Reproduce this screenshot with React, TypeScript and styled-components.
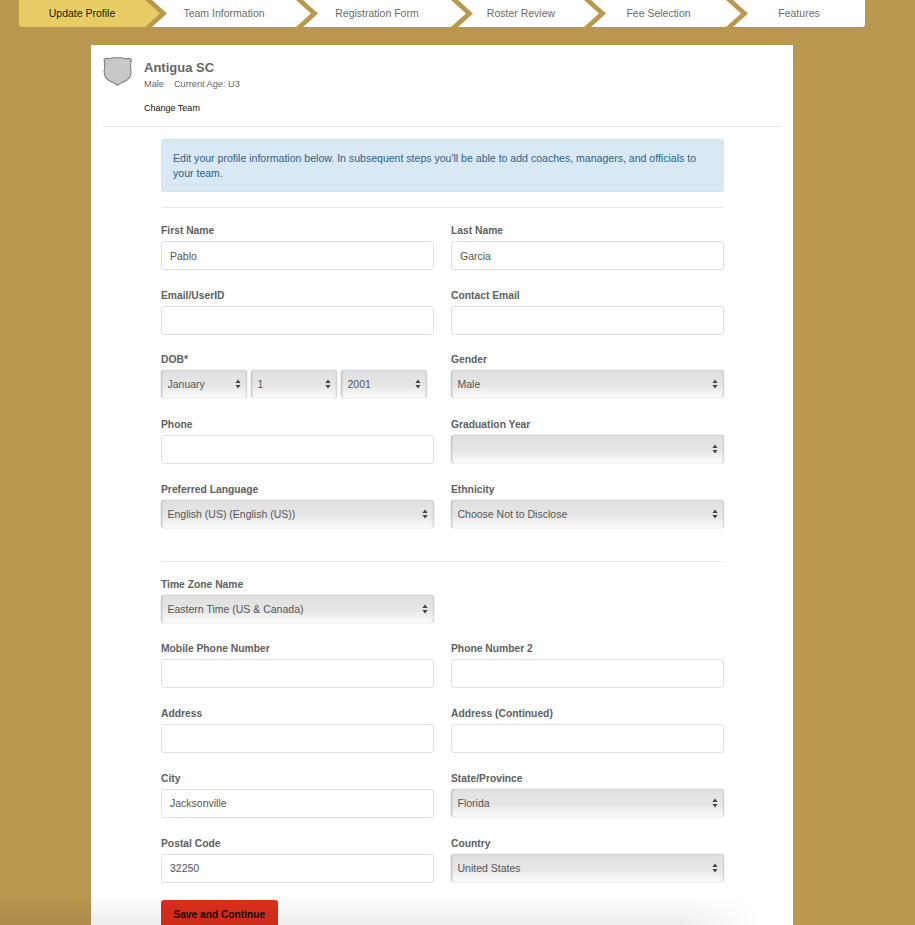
import React from 'react';
import styled, { createGlobalStyle } from 'styled-components';

const GlobalStyle = createGlobalStyle`
	html, body {
		margin: 0;
		height: 925px;
		overflow: hidden;
		background: #b9974f;
		font-family: "Liberation Sans", Arial, sans-serif;
	}
`;

const Page = styled.div`
	position: relative;
	height: 925px;
	overflow: hidden;
	padding-left: 19px;
	box-sizing: border-box;
`;

const Steps = styled.div`
	display: flex;
	height: 27px;
	width: 846px;
`;

const Step = styled.div<{ $w: number; $active?: boolean; $first?: boolean; $last?: boolean }>`
	flex: none;
	width: ${(p) => p.$w}px;
	height: 27px;
	margin-left: ${(p) => (p.$first ? 0 : -8)}px;
	display: flex;
	align-items: center;
	justify-content: center;
	padding-right: ${(p) => (p.$last ? 0 : 15)}px;
	padding-bottom: 2px;
	box-sizing: border-box;
	font-size: 10.5px;
	color: ${(p) => (p.$active ? '#1c1a12' : '#6b6b6b')};
	background: ${(p) => (p.$active ? '#e8cd66' : '#ffffff')};
	border-radius: ${(p) => (p.$first ? '0 0 0 3px' : p.$last ? '0 0 3px 0' : '0')};
	clip-path: ${(p) =>
		p.$first
			? 'polygon(0 0, calc(100% - 15px) 0, 100% 50%, calc(100% - 15px) 100%, 0 100%)'
			: p.$last
				? 'polygon(0 0, 100% 0, 100% 100%, 0 100%, 15px 50%)'
				: 'polygon(0 0, calc(100% - 15px) 0, 100% 50%, calc(100% - 15px) 100%, 0 100%, 15px 50%)'};
`;

const Card = styled.div`
	width: 702px;
	margin: 18px 0 0 72px;
	background: #ffffff;
	padding: 0 11px 0 12px;
	box-sizing: border-box;
	height: 900px;
`;

const TeamHeader = styled.div`
	display: flex;
	height: 81px;
	border-bottom: 1px solid #e8e8e8;
`;

const Crest = styled.svg`
	width: 29px;
	height: 29px;
	margin-top: 12px;
	flex: none;
`;

const TeamInfo = styled.div`
	margin-left: 12px;
	padding-top: 15px;
`;

const TeamName = styled.div`
	font-size: 13px;
	line-height: 16px;
	font-weight: bold;
	color: #666666;
`;

const TeamMeta = styled.div`
	display: flex;
	gap: 10px;
	margin-top: 3px;
	font-size: 9.2px;
	line-height: 11px;
	color: #666666;
`;

const ChangeTeam = styled.a`
	display: block;
	margin-top: 13px;
	font-size: 9px;
	line-height: 11px;
	color: #111111;
`;

const FormBody = styled.div`
	width: 562.5px;
	margin: 12px 0 0 58px;
`;

const Alert = styled.div`
	background: #d8e8f5;
	border: 1px solid #d1e4f3;
	border-radius: 3px;
	box-sizing: border-box;
	height: 53px;
	padding: 11px 11px;
	font-size: 10.55px;
	line-height: 15px;
	color: #2f5f85;
`;

const Rule = styled.div<{ $top: number; $bottom: number }>`
	height: 1px;
	background: #e8e8e8;
	margin-top: ${(p) => p.$top}px;
	margin-bottom: ${(p) => p.$bottom}px;
`;

const FieldGrid = styled.div`
	display: grid;
	grid-template-columns: 272.5px 272.5px;
	grid-auto-rows: 46px;
	column-gap: 17.5px;
	row-gap: 18.7px;
`;

const Field = styled.div`
	min-width: 0;
`;

const Label = styled.label`
	display: block;
	font-size: 10.3px;
	line-height: 14px;
	font-weight: bold;
	color: #606060;
	margin-bottom: 5px;
	height: 12px;
`;

const TextInput = styled.input`
	display: block;
	width: 100%;
	height: 29px;
	box-sizing: border-box;
	border: 1px solid #e0e0e0;
	border-radius: 3px;
	padding: 0 8px;
	font: 10.5px "Liberation Sans", Arial, sans-serif;
	color: #555555;
	background: #ffffff;
	outline: none;
`;

const SelectWrap = styled.div`
	position: relative;
	flex: 1;
	min-width: 0;
`;

const Select = styled.select`
	display: block;
	width: 100%;
	height: 28px;
	box-sizing: border-box;
	appearance: none;
	border: 0;
	border-radius: 3px;
	padding: 0 16px 0 6.5px;
	font: 10.5px "Liberation Sans", Arial, sans-serif;
	color: #555555;
	background: linear-gradient(180deg, #e0e0e0 0%, #e6e6e6 55%, #fcfcfc 100%);
	box-shadow: inset 2px 0 2px -1px #bdbdbd, inset -2px 0 2px -1px #cfcfcf, inset 0 1px 1px #d8d8d8, 0 0 0 0.5px #e6e6e6;
	outline: none;
`;

const Updown = styled.svg`
	position: absolute;
	right: 6px;
	top: 9px;
	width: 6px;
	height: 10px;
	pointer-events: none;
`;

const DobRow = styled.div`
	display: flex;
	gap: 4px;
`;

const DobCell = styled.div`
	flex: none;
	width: 86px;
	display: flex;
`;

const SaveButton = styled.button`
	display: block;
	margin-top: 17.5px;
	width: 116.5px;
	height: 28px;
	padding: 0;
	border: 0;
	border-radius: 3px;
	background: #dd2f1c;
	font: bold 10.2px "Liberation Sans", Arial, sans-serif;
	color: #1a0a06;
`;

const BottomFade = styled.div`
	position: absolute;
	left: 0;
	right: 0;
	bottom: 0;
	height: 30px;
	pointer-events: none;
	background: linear-gradient(180deg, rgba(0, 0, 0, 0), rgba(0, 0, 0, 0.07));
	mask-image: linear-gradient(90deg, #000 680px, transparent 760px);
`;

const noop = () => {};

const Dropdown = ({ value }: { value: string }) => (
	<SelectWrap>
		<Select value={value} onChange={noop}>
			<option value={value}>{value}</option>
		</Select>
		<Updown viewBox="0 0 6 10">
			<path d="M3 0.5 L5.6 4 H0.4 Z M3 9.5 L0.4 6 H5.6 Z" fill="#444444" />
		</Updown>
	</SelectWrap>
);

const InputField = ({ label, value = '' }: { label: string; value?: string }) => (
	<Field>
		<Label>{label}</Label>
		<TextInput value={value} onChange={noop} />
	</Field>
);

const SelectField = ({ label, value }: { label: string; value: string }) => (
	<Field>
		<Label>{label}</Label>
		<Dropdown value={value} />
	</Field>
);

const steps = [
	{ name: 'Update Profile', w: 141 },
	{ name: 'Team Information', w: 159 },
	{ name: 'Registration Form', w: 163 },
	{ name: 'Roster Review', w: 141 },
	{ name: 'Fee Selection', w: 150 },
	{ name: 'Features', w: 132 }
];

const App = () => {
	return (
		<Page>
			<GlobalStyle />
			<Steps>
				{steps.map((s, i) => (
					<Step key={s.name} $w={s.w} $active={i === 0} $first={i === 0} $last={i === steps.length - 1}>
						{s.name}
					</Step>
				))}
			</Steps>
			<Card>
				<TeamHeader>
					<Crest viewBox="0 0 29 29">
						<path
							d="M1 3 L3 1.2 C6 1.8 8 1.8 10 0.8 H19 C21 1.8 24 1.8 26 1.2 L28.4 3 C27.3 6 27.3 9 27.8 12 C28.6 17 26.8 22 22 24.3 C19 25.7 17 26.3 14.6 28.4 C12.3 26.3 10 25.7 7.2 24.3 C2.4 22 0.6 17 1.4 12 C1.9 9 2 6 1 3 Z"
							fill="#c8c8c8"
							stroke="#7d7d7d"
							strokeWidth="1.1"
						/>
					</Crest>
					<TeamInfo>
						<TeamName>Antigua SC</TeamName>
						<TeamMeta>
							<span>Male</span>
							<span>Current Age: U3</span>
						</TeamMeta>
						<ChangeTeam>Change Team</ChangeTeam>
					</TeamInfo>
				</TeamHeader>
				<FormBody>
					<Alert>
						Edit your profile information below. In subsequent steps you'll be able to add coaches, managers, and officials to your team.
					</Alert>
					<Rule $top={15} $bottom={16} />
					<FieldGrid>
						<InputField label="First Name" value="Pablo" />
						<InputField label="Last Name" value="Garcia" />
						<InputField label="Email/UserID" />
						<InputField label="Contact Email" />
						<Field>
							<Label>DOB*</Label>
							<DobRow>
								<DobCell><Dropdown value="January" /></DobCell>
								<DobCell><Dropdown value="1" /></DobCell>
								<DobCell><Dropdown value="2001" /></DobCell>
							</DobRow>
						</Field>
						<SelectField label="Gender" value="Male" />
						<InputField label="Phone" />
						<SelectField label="Graduation Year" value="" />
						<SelectField label="Preferred Language" value="English (US) (English (US))" />
						<SelectField label="Ethnicity" value="Choose Not to Disclose" />
					</FieldGrid>
					<Rule $top={32} $bottom={16} />
					<FieldGrid>
						<SelectField label="Time Zone Name" value="Eastern Time (US & Canada)" />
						<div />
						<InputField label="Mobile Phone Number" />
						<InputField label="Phone Number 2" />
						<InputField label="Address" />
						<InputField label="Address (Continued)" />
						<InputField label="City" value="Jacksonville" />
						<SelectField label="State/Province" value="Florida" />
						<InputField label="Postal Code" value="32250" />
						<SelectField label="Country" value="United States" />
					</FieldGrid>
					<SaveButton>Save and Continue</SaveButton>
				</FormBody>
			</Card>
			<BottomFade />
		</Page>
	);
};

export default App;
